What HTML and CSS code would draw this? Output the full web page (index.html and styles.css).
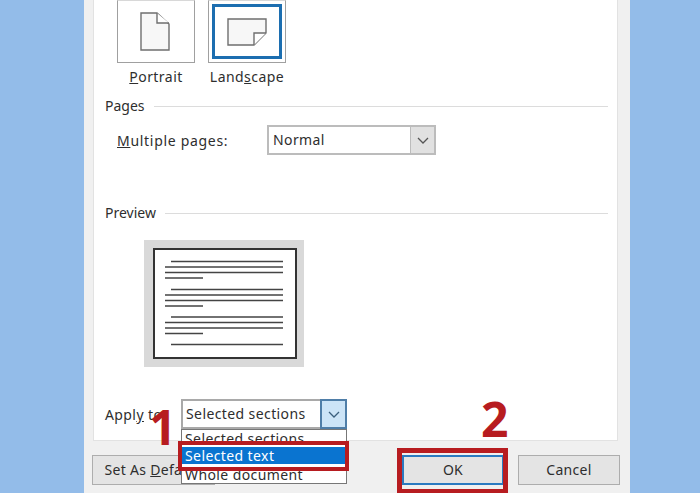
FILE: index.html
```html
<!DOCTYPE html>
<html lang="en">
<head>
  <meta charset="UTF-8">
  <title>Page Setup</title>
  <link rel="stylesheet" href="styles.css">
</head>
<body>
<div class="dialog">
  <div class="pane">
    <div class="orient-row">
      <div class="orient">
        <div class="tile">
          <svg class="icon-portrait" width="30" height="39" viewBox="0 0 30 39">
            <path d="M1 1H17L29 12V38H1Z" fill="#f7f7f7" stroke="#6f6f6f" stroke-width="1.4"/>
            <path d="M17 1V11H29" fill="#fff" stroke="#6f6f6f" stroke-width="1.4"/>
          </svg>
        </div>
        <div class="orient-label"><u>P</u>ortrait</div>
      </div>
      <div class="orient">
        <div class="tile tile-on">
          <svg width="40" height="28" viewBox="0 0 40 28">
            <path d="M1 1H39V15L27 27H1Z" fill="#f7f7f7" stroke="#6f6f6f" stroke-width="1.4"/>
            <path d="M27 27V15H39" fill="#fff" stroke="#6f6f6f" stroke-width="1.4"/>
          </svg>
        </div>
        <div class="orient-label">Land<u>s</u>cape</div>
      </div>
    </div>

    <div class="group-title group-pages">Pages</div>
    <div class="pages-row">
      <div class="field-label"><u>M</u>ultiple pages:</div>
      <div class="select select-normal">
        <span class="select-text">Normal</span>
        <span class="arrow">
          <svg width="12" height="7" viewBox="0 0 12 7"><path d="M1 1L6 6L11 1" fill="none" stroke="#555" stroke-width="1.3"/></svg>
        </span>
      </div>
    </div>

    <div class="group-title group-preview">Preview</div>
    <div class="preview">
      <svg class="preview-page" width="144" height="111" viewBox="0 0 144 111">
        <rect x="1" y="1" width="142" height="109" fill="#fff" stroke="#333" stroke-width="2"/>
        <g stroke="#444" stroke-width="1.3">
          <path d="M18 13.500H130M12 19H130M12 24.500H130M12 30H50"/>
          <path d="M18 41.500H130M12 47H130M12 52.500H130M12 58H50"/>
          <path d="M18 69H130M12 74.500H130M12 80H130M12 85.500H50"/>
          <path d="M18 96.500H130"/>
        </g>
      </svg>
    </div>

    <div class="apply-row">
      <div class="field-label apply-label">Appl<u>y</u> to:</div>
      <div class="select select-apply">
        <span class="select-text">Selected sections</span>
        <span class="arrow arrow-on">
          <svg width="12" height="7" viewBox="0 0 12 7"><path d="M1 1L6 6L11 1" fill="none" stroke="#3b5f7d" stroke-width="1.3"/></svg>
        </span>
      </div>
    </div>
  </div>

  <div class="buttons">
    <div class="btn btn-default">Set As <u>D</u>efault</div>
    <div class="btn btn-ok">OK</div>
    <div class="btn btn-cancel">Cancel</div>
  </div>

  <div class="dropdown">
    <div class="opt">Selected sections</div>
    <div class="opt opt-on">Selected text</div>
    <div class="opt">Whole document</div>
  </div>
  <div class="mark mark-text"></div>
  <div class="mark mark-ok"></div>
  <div class="step step-1">1</div>
  <div class="step step-2">2</div>
</div>
</body>
</html>
```

FILE: styles.css
```css
html, body {
  margin: 0;
  height: 493px;
  overflow: hidden;
}
body {
  background: #93bce9;
  font-family: "Noto Sans", sans-serif;
  font-size: 14px;
  color: #2e2e2e;
}
.dialog {
  position: relative;
  width: 546px;
  height: 493px;
  margin-left: 84px;
  background: #f0f0f0;
  overflow: hidden;
}
.pane {
  width: 525px;
  height: 441px;
  margin-left: 9px;
  background: #fff;
  border: 1px solid #e2e2e2;
  border-top: 0;
  box-sizing: border-box;
}

/* orientation */
.orient-row {
  display: flex;
  gap: 13px;
  padding-left: 23px;
}
.orient {
  width: 78px;
}
.tile {
  height: 63px;
  box-sizing: border-box;
  border: 1px solid #a0a0a0;
  border-top-color: #d8d8d8;
  display: flex;
  align-items: center;
  justify-content: center;
}
.icon-portrait {
  margin-right: 3px;
}
.tile-on {
  box-shadow: inset 0 0 0 3px #fff, inset 0 0 0 6px #1c6eb0;
}
.orient-label {
  text-align: center;
  line-height: 20px;
  margin-top: 4px;
  letter-spacing: .45px;
}

/* groups */
.group-title {
  display: flex;
  align-items: center;
  gap: 9px;
  margin-right: 9px;
  padding-left: 11px;
  line-height: 20px;
}
.group-title::after {
  content: "";
  flex: 1;
  height: 1px;
  background: #dcdcdc;
}
.group-pages {
  margin-top: 9px;
}
.group-preview {
  margin-top: 48px;
}
.field-label {
  letter-spacing: .7px;
}
.pages-row {
  display: flex;
  align-items: center;
  margin-top: 9px;
  padding-left: 23px;
}
.pages-row .field-label {
  width: 150px;
}

/* selects */
.select {
  display: flex;
  height: 30px;
  box-sizing: border-box;
  border: 2px solid #bcbcbc;
  background: #fff;
  align-items: stretch;
}
.select-text {
  flex: 1;
  padding-left: 4px;
  line-height: 26px;
  letter-spacing: .4px;
}
.arrow {
  width: 23px;
  background: #e1e1e1;
  border-left: 1px solid #bcbcbc;
  display: flex;
  align-items: center;
  justify-content: center;
}
.select-normal {
  width: 169px;
}
.select-apply {
  width: 166px;
  border-color: #a9a9a9;
}
.select-apply .select-text {
  padding-left: 3px;
}
.arrow-on {
  background: #cce4f7;
  border: 2px solid #4f7ea8;
  margin: -2px;
}

/* preview */
.preview {
  width: 160px;
  height: 127px;
  margin: 17px 0 0 50px;
  background: #d9d9d9;
  box-sizing: border-box;
  padding: 8px 0 0 9px;
}
.preview-page {
  display: block;
}

.apply-row {
  display: flex;
  align-items: center;
  margin-top: 32px;
  padding-left: 11px;
}
.apply-label {
  width: 76px;
  letter-spacing: .4px;
}

/* bottom buttons */
.buttons {
  display: flex;
  margin-top: 14px;
  padding-left: 8px;
}
.btn {
  height: 30px;
  box-sizing: border-box;
  border: 1px solid #adadad;
  background: #e4e4e4;
  text-align: center;
  line-height: 28px;
  letter-spacing: .3px;
}
.btn-default {
  width: 123px;
  padding-right: 2px;
}
.btn-ok {
  width: 102px;
  margin-left: 187px;
  border: 2px solid #2a7ac0;
  line-height: 26px;
}
.btn-cancel {
  width: 102px;
  margin-left: 14px;
}

/* open list and the red annotations lie over the dialog */
.dropdown {
  position: absolute;
  left: 97px;
  top: 429px;
  width: 166px;
  height: 55px;
  box-sizing: border-box;
  border: 1px solid #777;
  background: #fff;
}
.opt {
  height: 17px;
  line-height: 17px;
  padding-left: 3px;
  letter-spacing: .4px;
}
.opt:last-child {
  padding-top: 2px;
}
.opt-on {
  background: #0a74d0;
  color: #fff;
}
.mark {
  position: absolute;
  box-sizing: border-box;
  border: 4px solid #b71c20;
}
.mark-text {
  left: 94px;
  top: 441px;
  width: 171px;
  height: 30px;
}
.mark-ok {
  left: 313px;
  top: 448px;
  width: 111px;
  height: 46px;
  border-width: 5px;
}
.step {
  position: absolute;
  font-family: "Open Sans", sans-serif;
  font-weight: 700;
  font-size: 48px;
  line-height: 48px;
  color: #b71c20;
}
.step-1 {
  left: 65px;
  top: 403px;
}
.step-2 {
  left: 397px;
  top: 395px;
}
```
